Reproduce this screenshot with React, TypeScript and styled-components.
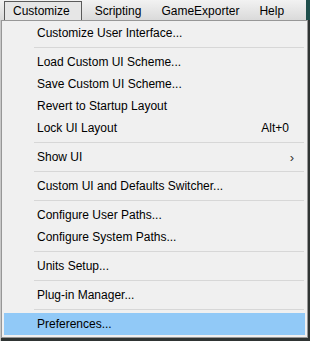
import styled, { createGlobalStyle } from 'styled-components';

const GlobalStyle = createGlobalStyle`
  html, body {
    margin: 0;
    padding: 0;
    background: #2f3433;
  }
  body {
    font-family: "Liberation Sans", Arial, sans-serif;
    font-size: 12px;
    color: #000;
  }
`;

const Window = styled.div`
  width: 310px;
  height: 341px;
  overflow: hidden;
  background: linear-gradient(to right, #c8c8c8 0px, #c8c8c8 1px, #2f3433 1px);
`;

const MenuBar = styled.div`
  height: 20px;
  width: 310px;
  display: flex;
  align-items: stretch;
  padding-left: 4px;
  box-sizing: border-box;
  background: linear-gradient(to bottom, #f2f2f2, #dadada);
  border-right: 4px solid #1f4f4c;
`;

const MenuTitle = styled.div<{ $active?: boolean }>`
  display: flex;
  align-items: center;
  padding: ${({ $active }) => ($active ? '0 11px 0 8px' : '0 10px')};
  margin-top: 1px;
  line-height: 1;
  border: ${({ $active }) => ($active ? '1px solid #5a5a5a' : 'none')};
  border-bottom: none;
  background: ${({ $active }) => ($active ? '#e6e6e6' : 'transparent')};
  margin-right: ${({ $active }) => ($active ? '3px' : '0')};
`;

const Dropdown = styled.div`
  margin-left: 1px;
  width: 307px;
  box-sizing: border-box;
  border: 1px solid #979797;
  background: #f0f0f0;
  padding: 1px 2px 2px;
  display: flex;
  flex-direction: column;
`;

const Item = styled.div<{ $hover?: boolean }>`
  height: 22px;
  display: flex;
  align-items: center;
  justify-content: space-between;
  padding: 0 14px 0 33px;
  background: ${({ $hover }) => ($hover ? '#91c9f7' : 'transparent')};
  white-space: nowrap;
`;

const Shortcut = styled.span`
  margin-right: 2px;
`;

const Arrow = styled.span`
  font-size: 13px;
  color: #333;
  margin-right: -3px;
`;

const Separator = styled.div`
  height: 1px;
  background: #d7d7d7;
  margin: 3px 1px 3px 30px;
`;

type Entry =
  | { sep: true }
  | { label: string; shortcut?: string; sub?: boolean; hover?: boolean };

const entries: Entry[] = [
  { label: 'Customize User Interface...' },
  { sep: true },
  { label: 'Load Custom UI Scheme...' },
  { label: 'Save Custom UI Scheme...' },
  { label: 'Revert to Startup Layout' },
  { label: 'Lock UI Layout', shortcut: 'Alt+0' },
  { sep: true },
  { label: 'Show UI', sub: true },
  { sep: true },
  { label: 'Custom UI and Defaults Switcher...' },
  { sep: true },
  { label: 'Configure User Paths...' },
  { label: 'Configure System Paths...' },
  { sep: true },
  { label: 'Units Setup...' },
  { sep: true },
  { label: 'Plug-in Manager...' },
  { sep: true },
  { label: 'Preferences...', hover: true },
];

const App = () => {
  return (
    <>
      <GlobalStyle />
      <Window>
        <MenuBar>
          <MenuTitle $active>Customize</MenuTitle>
          <MenuTitle>Scripting</MenuTitle>
          <MenuTitle>GameExporter</MenuTitle>
          <MenuTitle>Help</MenuTitle>
        </MenuBar>
        <Dropdown>
          {entries.map((e, i) =>
            'sep' in e ? (
              <Separator key={i} />
            ) : (
              <Item key={i} $hover={e.hover}>
                <span>{e.label}</span>
                {e.shortcut && <Shortcut>{e.shortcut}</Shortcut>}
                {e.sub && <Arrow>&#x203A;</Arrow>}
              </Item>
            )
          )}
        </Dropdown>
      </Window>
    </>
  );
};

export default App;
